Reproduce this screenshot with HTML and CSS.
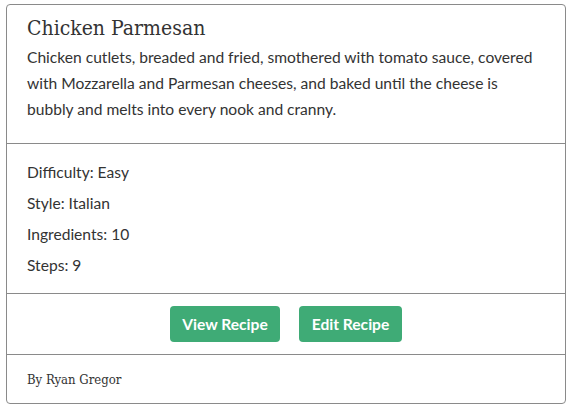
FILE: index.html
```html
<!DOCTYPE html>
<html>
<head>
<meta charset="utf-8">
<link rel="stylesheet" href="styles.css">
</head>
<body>
<div class="card">
  <div class="section head">
    <h1 class="title">Chicken Parmesan</h1>
    <p class="desc">Chicken cutlets, breaded and fried, smothered with tomato sauce, covered with Mozzarella and Parmesan cheeses, and baked until the cheese is bubbly and melts into every nook and cranny.</p>
  </div>
  <div class="section meta">
    <div class="row">Difficulty: Easy</div>
    <div class="row">Style: Italian</div>
    <div class="row">Ingredients: 10</div>
    <div class="row">Steps: 9</div>
  </div>
  <div class="section actions">
    <button class="btn btn-view">View Recipe</button>
    <button class="btn btn-edit">Edit Recipe</button>
  </div>
  <div class="section foot">By Ryan Gregor</div>
</div>
</body>
</html>
```
FILE: styles.css
```css
html, body { margin: 0; padding: 0; background: #fff; }
body { padding: 4px 5px 0 6px; font-family: Lato, "Open Sans", sans-serif; color: #333; }
.card {
  width: 558px;
  border: 1px solid #8a8a8a;
  border-radius: 4px;
}
.section { border-top: 1px solid #8a8a8a; padding: 0 20px; }
.section:first-child { border-top: none; }
.head { padding-top: 11px; padding-bottom: 21px; }
.title {
  margin: 0;
  font-family: "DejaVu Serif", "Liberation Serif", serif;
  font-stretch: condensed;
  font-weight: normal;
  font-size: 21px;
  line-height: 24px;
  color: #333;
}
.desc { margin: 4px 0 0; font-size: 15.6px; line-height: 26px; }
.meta { padding-top: 13px; padding-bottom: 12px; }
.row { font-size: 15.6px; line-height: 31px; }
.actions { display: flex; justify-content: center; gap: 19px; padding-top: 12px; padding-bottom: 12px; }
.btn {
  height: 36px;
  border: none;
  border-radius: 4px;
  background: #3fab76;
  color: #fff;
  font-family: Lato, sans-serif;
  font-weight: bold;
  font-size: 15.6px;
  padding: 0;
  white-space: nowrap;
}
.btn-view { width: 110px; }
.btn-edit { width: 103px; }
.foot {
  height: 48px;
  display: flex;
  align-items: center;
  font-family: "DejaVu Serif", "Liberation Serif", serif;
  font-stretch: condensed;
  font-size: 13px;
  color: #333;
}
```
